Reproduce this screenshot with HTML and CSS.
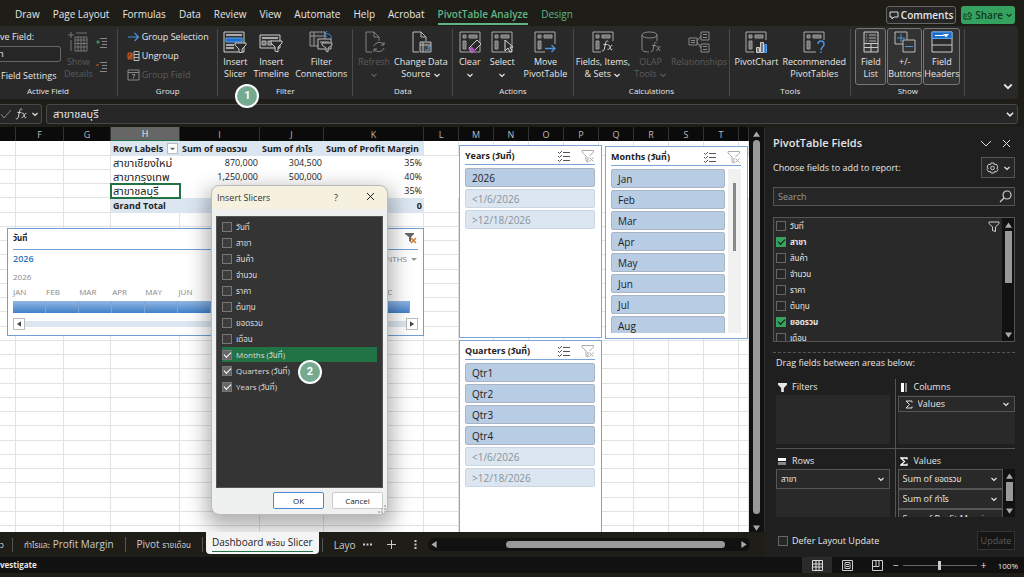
FILE: index.html
```html
<!DOCTYPE html>
<html lang="en">
<head>
<meta charset="utf-8">
<title>PivotTable Analyze</title>
<link rel="stylesheet" href="styles.css">
</head>
<body>
<svg class="defs" aria-hidden="true">
  <defs>
    <symbol id="pivot" viewBox="0 0 22 22"><path d="M1 1h20v20H1z" fill="#2b2b2b" stroke="#aaa"/><path d="M4 4h3v3H4zM10 4h8v3h-8zM4 10h3v8H4z" fill="#777" stroke="#999"/></symbol>
    <symbol id="chev" viewBox="0 0 8 8"><path d="M1.5 3L4 5.5 6.500 3" fill="none" stroke="currentColor" stroke-width="1.200"/></symbol>
    <symbol id="multi" viewBox="0 0 14 12"><path d="M1 2l1.500 1.500L5 1M1 6l1.500 1.500L5 5M1 10l1.500 1.500L5 9M6 2.500h7M6 6.500h7M6 10.500h7" fill="none" stroke="#555"/></symbol>
    <symbol id="clearf" viewBox="0 0 14 14"><path d="M1 1.500h11.500v1.500L8.500 7M1 1.500V3l4 4v5l2 1V8M8.500 8.500l4 4M12.500 8.500l-4 4" fill="none" stroke="#aaa"/></symbol>
    <symbol id="funnel" viewBox="0 0 10 10"><path d="M0 0h10v2L6.500 5.500V10h-3V5.500L0 2z" fill="currentColor"/></symbol>
    <symbol id="ofunnel" viewBox="0 0 12 12"><path d="M1 1h10v1.500L7.500 6v4.500l-3-1V6L1 2.500z" fill="#2a2a2a" stroke="#ccc"/></symbol>
    <symbol id="up" viewBox="0 0 8 6"><path d="M4 0l4 6H0z" fill="#aaa"/></symbol>
    <symbol id="down" viewBox="0 0 8 6"><path d="M4 6l4-6H0z" fill="#aaa"/></symbol>
    <symbol id="left" viewBox="0 0 6 8"><path d="M0 4l6-4v8z" fill="currentColor"/></symbol>
    <symbol id="right" viewBox="0 0 6 8"><path d="M6 4L0 0v8z" fill="currentColor"/></symbol>
    <symbol id="doc" viewBox="0 0 22 22"><path d="M9 21H3V1h8l5 5v4M11 1v5h5" fill="none" stroke="#bbb"/></symbol>
    <symbol id="fx" viewBox="0 0 16 14"><path d="M9 1.500C7-.2 6 1.500 5.500 4L4 11c-.5 2-1.500 2.500-3 1.500M3 5h5M8.500 6.500c2-1.500 2 0 3 3s1.500 2.500 2.500 1M14 6.500c-1.500-1-2 1-3 2.500s-1.500 3-3 2" fill="none" stroke="currentColor" stroke-width="1.100"/></symbol>
  </defs>
</svg>

<header class="tabbar">
  <nav class="tabs">
    <a href="#">Draw</a><a href="#">Page Layout</a><a href="#">Formulas</a><a href="#">Data</a><a href="#">Review</a><a href="#">View</a><a href="#">Automate</a><a href="#">Help</a><a href="#">Acrobat</a><a href="#" class="current">PivotTable Analyze</a><a href="#" class="context">Design</a>
  </nav>
  <button class="comments"><svg width="10" height="9" viewBox="0 0 10 9"><path d="M1 1h8v5H5L3 8V6H1z" fill="none" stroke="#ddd"/></svg>Comments</button>
  <button class="share"><svg width="10" height="9" viewBox="0 0 10 9"><path d="M3 3H1v5h7V6M3 6c0-2 1-3 3-3V1l3 3-3 2V4.500" fill="none" stroke="#10381f"/></svg>Share<svg width="8" height="8"><use href="#chev"/></svg></button>
</header>

<section class="ribbon">
  <div class="group g-active">
    <div class="tools">
      <div class="active-field">
        <label for="af">ve Field:</label>
        <input id="af" value="า">
        <button class="plain">Field Settings</button>
      </div>
      <button class="big off"><svg width="22" height="22" viewBox="0 0 22 22"><path d="M4 1v6M1 4h6M9 2h11M4 9v11M8 6h12v14H8zM8 9h12M8 12.500h12M8 16h12M11 6v14M14 6v14M17 6v14" fill="none" stroke="#777"/></svg><span>Show<br>Details</span></button>
      <div class="expand">
        <svg width="12" height="12" viewBox="0 0 12 12"><path d="M4 1.500h7M6 4.500h5M6 7.500h5M4 10.500h7" stroke="#888"/><path d="M0 5h4M2 3v4" stroke="#4a9a66"/></svg>
        <svg width="12" height="12" viewBox="0 0 12 12"><path d="M4 1.500h7M6 4.500h5M6 7.500h5M4 10.500h7" stroke="#888"/><path d="M0 4h3" stroke="#c55a1e"/></svg>
      </div>
    </div>
    <div class="caption">Active Field</div>
  </div>
  <div class="group g-group">
    <div class="stack">
      <button class="row"><svg width="13" height="12" viewBox="0 0 13 12"><path d="M1 6h10M7.500 2L11.500 6l-4 4" fill="none" stroke="#4b93e0" stroke-width="1.200"/></svg>Group Selection</button>
      <button class="row"><svg width="13" height="12" viewBox="0 0 13 12"><path d="M1 3h4v6H1z" fill="#7a3413" stroke="#c55a1e"/><path d="M2 8l3-4" stroke="#e67a35"/><path d="M7 1.500h5v9H7zM7 4.500h5M7 7.500h5" fill="none" stroke="#bbb"/></svg>Ungroup</button>
      <button class="row off"><svg width="13" height="12" viewBox="0 0 13 12"><path d="M1 1h11v10H1zM1 3.500h11M5 5.500h3l-2 4" fill="none" stroke="#888"/></svg>Group Field</button>
    </div>
    <div class="caption">Group</div>
  </div>
  <div class="group g-filter">
    <div class="tools">
      <button class="big"><svg width="24" height="22" viewBox="0 0 24 22"><path d="M1 1h20v20H1z" fill="#333" stroke="#ccc"/><path d="M3 4h16" stroke="#aaa" stroke-width="2"/><path d="M3 7h16v4H3z" fill="#1e6fc8" stroke="#5aa0ea"/><path d="M3 14h8M3 17h8" stroke="#aaa" stroke-width="2"/><path d="M12 12h11v2l-4 4v4l-3-1v-3l-4-4z" fill="#292929" stroke="#ccc"/></svg><span>Insert<br>Slicer</span></button>
      <button class="big"><svg width="24" height="22" viewBox="0 0 24 22"><path d="M1 4h20v13H1z" fill="#333" stroke="#ccc"/><path d="M3 7h16" stroke="#aaa" stroke-width="2"/><path d="M3 10h4v4H3zM9 10h4v4H9z" fill="#777" stroke="#aaa"/><path d="M12 10h11v2l-4 4v5l-3-1v-4l-4-4z" fill="#292929" stroke="#ccc"/></svg><span>Insert<br>Timeline</span></button>
      <button class="big"><svg width="24" height="22" viewBox="0 0 24 22"><path d="M1 1h15v14H1zM5 1v14M1 5h15" fill="#333" stroke="#999"/><path d="M9 8h13v10H9zM11 11h9" fill="#292929" stroke="#bbb"/><path d="M13 12h10v2l-4 3v4l-2-1v-3l-4-3z" fill="#292929" stroke="#bbb"/><path d="M22 8c1-4-2-6-7-5M18 0l-3 3 3 3" fill="none" stroke="#4b93e0"/></svg><span>Filter<br>Connections</span></button>
    </div>
    <div class="caption">Filter</div>
    <span class="badge b1">1</span>
  </div>
  <div class="group g-data">
    <div class="tools">
      <button class="big off"><svg width="22" height="22" viewBox="0 0 22 22"><use href="#doc" opacity=".6"/><path d="M11 15c1-4 8-5 10-1M21 11v3h-3M21 17c-1 4-8 5-10 1M11 21v-3h3" fill="none" stroke="#888"/></svg><span>Refresh<br><svg width="8" height="8"><use href="#chev"/></svg></span></button>
      <button class="big"><svg width="22" height="22" viewBox="0 0 22 22"><use href="#doc"/><path d="M10 11h11v10H10zM10 14h11M13 11v10" fill="#444" stroke="#bbb"/><path d="M15 19h4v-4M17.500 16.500L19 15l1.500 1.500" fill="none" stroke="#4b93e0"/></svg><span>Change Data<br>Source <svg width="8" height="8"><use href="#chev"/></svg></span></button>
    </div>
    <div class="caption">Data</div>
  </div>
  <div class="group g-actions">
    <div class="tools">
      <button class="big"><svg width="22" height="22" viewBox="0 0 22 22"><use href="#pivot"/><path d="M10 17l8-8 4 4-8 8h-2z" fill="#292929" stroke="#ccc"/><path d="M10.500 17.500l2-2 4 4-2 2h-2z" fill="#b04fc0"/></svg><span>Clear<br><svg width="8" height="8"><use href="#chev"/></svg></span></button>
      <button class="big"><svg width="22" height="22" viewBox="0 0 22 22"><use href="#pivot"/><path d="M14 9v11l3-3 2 4 2-1-2-4h3z" fill="#292929" stroke="#ddd"/></svg><span>Select<br><svg width="8" height="8"><use href="#chev"/></svg></span></button>
      <button class="big"><svg width="22" height="22" viewBox="0 0 22 22"><use href="#pivot"/><path d="M11 13h11v9H11z" fill="#292929"/><path d="M11 17.500h10M17.500 14l3.500 3.500-3.500 3.500" fill="none" stroke="#4b93e0" stroke-width="1.300"/></svg><span>Move<br>PivotTable</span></button>
    </div>
    <div class="caption">Actions</div>
  </div>
  <div class="group g-calc">
    <div class="tools">
      <button class="big"><svg width="22" height="22" viewBox="0 0 22 22"><use href="#pivot"/><path d="M9 10h13v12H9z" fill="#292929"/><use href="#fx" x="9" y="9" width="13" height="12"/></svg><span>Fields, Items,<br>&amp; Sets <svg width="8" height="8"><use href="#chev"/></svg></span></button>
      <button class="big off"><svg width="22" height="22" viewBox="0 0 22 22"><path d="M2 4v14c0 2 3 3 7 3M2 4c0-4 15-4 15 0v6M2 4c0 4 15 4 15 0" fill="none" stroke="#888"/><g color="#999"><use href="#fx" x="10" y="10" width="12" height="12"/></g></svg><span>OLAP<br>Tools <svg width="8" height="8"><use href="#chev"/></svg></span></button>
      <button class="big off"><svg width="22" height="22" viewBox="0 0 22 22"><path d="M1 7h8v7H1zM13 1h8v8h-8zM13 13h8v8h-8zM3 9.500h4M3 11.500h4M15 3.500h4M15 6.500h4M15 15.500h4M15 18.500h4M9 10l4-5M9 11l4 6" fill="none" stroke="#8a8a8a"/></svg><span>Relationships</span></button>
    </div>
    <div class="caption">Calculations</div>
  </div>
  <div class="group g-tools">
    <div class="tools">
      <button class="big"><svg width="22" height="22" viewBox="0 0 22 22"><use href="#pivot"/><path d="M9 9h13v13H9z" fill="#292929"/><path d="M11.500 16.500h3v5h-3zM15.500 11.500h3v10h-3z" fill="#777" stroke="#ccc"/><path d="M19.500 13.500h2v8h-2z" fill="#1e6fc8" stroke="#5aa0ea"/></svg><span>PivotChart</span></button>
      <button class="big"><svg width="22" height="22" viewBox="0 0 22 22"><use href="#pivot"/><path d="M13 9h9v13h-9z" fill="#292929"/><path d="M15 13c0-4 6-4 6 0 0 3-3 3-3 6M18 20.500v1.500" fill="none" stroke="#4b93e0" stroke-width="1.500"/></svg><span>Recommended<br>PivotTables</span></button>
    </div>
    <div class="caption">Tools</div>
  </div>
  <div class="group g-show">
    <div class="tools">
      <button class="big pressed"><svg width="16" height="22" viewBox="0 0 16 22"><path d="M1 1h14v20H1zM1 12.500h14M1 16.500h14M8 12v9" fill="#3a3a3a" stroke="#ccc"/><path d="M3 4h1M6 4h7M3 7h1M6 7h7M3 10h1M6 10h7" stroke="#aaa"/></svg><span>Field<br>List</span></button>
      <button class="big pressed"><svg width="22" height="22" viewBox="0 0 22 22"><path d="M1 1h12v12H1z" fill="#333" stroke="#bbb"/><path d="M9 9h12v12H9z" fill="#333" stroke="#bbb"/><path d="M3 7h8M7 3v8M11 15.500h8" stroke="#4b93e0"/></svg><span>+/-<br>Buttons</span></button>
      <button class="big pressed"><svg width="22" height="22" viewBox="0 0 22 22"><path d="M1 1h20v20H1zM1 14h20" fill="#2b2b2b" stroke="#ccc"/><path d="M1 1h20v6.500H1z" fill="#1e6fc8" stroke="#5aa0ea"/><path d="M4 4.500h9" stroke="#fff"/><path d="M12 3h6l-3 3.500z" fill="#fff"/></svg><span>Field<br>Headers</span></button>
    </div>
    <div class="caption">Show</div>
  </div>
  <div class="group g-end"><button class="collapse" aria-label="Collapse"><svg width="12" height="12"><use href="#chev"/></svg></button></div>
</section>

<section class="formula">
  <div class="fxbox">
    <svg width="12" height="12" viewBox="0 0 12 12"><path d="M1 6l3 4 7-8" fill="none" stroke="#888"/></svg>
    <svg width="13" height="12"><use href="#fx"/></svg>
    <svg width="8" height="8"><use href="#chev"/></svg>
  </div>
  <div class="fbar"><input aria-label="Formula" value="สาขาชลบุรี"><svg width="10" height="10"><use href="#chev"/></svg></div>
</section>

<main class="main">
  <div class="book">
    <div class="view">
      <div class="sheet">
        <table class="cells">
          <colgroup><col class="a"><col class="f"><col class="g"><col class="h"><col class="i"><col class="j"><col class="k"><col class="l"><col class="l"><col class="l"><col class="l"><col class="l"><col class="l"><col class="l"><col class="l"><col class="l"><col></colgroup>
          <thead><tr><th></th><th>F</th><th>G</th><th class="sel">H</th><th>I</th><th>J</th><th>K</th><th>L</th><th>M</th><th>N</th><th>O</th><th>P</th><th>Q</th><th>R</th><th>S</th><th>T</th><th></th></tr></thead>
          <tbody id="rows">
            <tr class="hd"><td></td><td></td><td></td><td><div class="rl">Row Labels<button aria-label="Filter rows"><svg width="7" height="7" viewBox="0 0 8 8"><path d="M1 3h6L4 6z" fill="#666"/></svg></button></div></td><td>Sum of ยอดรวม</td><td>Sum of กำไร</td><td>Sum of Profit Margin</td></tr>
            <tr class="val"><td></td><td></td><td></td><td>สาขาเชียงใหม่</td><td>870,000</td><td>304,500</td><td>35%</td></tr>
            <tr class="val"><td></td><td></td><td></td><td>สาขากรุงเทพ</td><td>1,250,000</td><td>500,000</td><td>40%</td></tr>
            <tr class="val"><td></td><td></td><td></td><td class="cursor">สาขาชลบุรี</td><td></td><td></td><td>35%</td></tr>
            <tr class="hd total"><td></td><td></td><td></td><td>Grand Total</td><td></td><td></td><td>0</td></tr>
          </tbody>
        </table>

        <section class="timeline">
          <div class="tl-head"><b>วันที่</b><svg width="13" height="12" viewBox="0 0 13 12"><path d="M0 1h9v1L6 5v5l-2-1V5L0 2z" fill="#666"/><path d="M6 6l5 5M11 6l-5 5" stroke="#d07a2c" stroke-width="1.500"/></svg></div>
          <div class="tl-sel"><span>2026</span><button>MONTHS <svg width="8" height="8" viewBox="0 0 8 8"><path d="M1 3h6L4 6z" fill="#999"/></svg></button></div>
          <div class="tl-year">2026</div>
          <div class="tl-months"><span>JAN</span><span>FEB</span><span>MAR</span><span>APR</span><span>MAY</span><span>JUN</span><span>JUL</span><span>AUG</span><span>SEP</span><span>OCT</span><span>NOV</span><span>DEC</span></div>
          <div class="tl-bar"><i></i><i></i><i></i><i></i><i></i><i></i><i></i><i></i><i></i><i></i><i></i><i></i></div>
          <div class="tl-scroll"><button aria-label="Earlier"><svg width="4" height="6"><use href="#left"/></svg></button><div></div><button aria-label="Later"><svg width="4" height="6"><use href="#right"/></svg></button></div>
        </section>

        <section class="slicer s-years">
          <header><b>Years (วันที่)</b><svg width="14" height="12"><use href="#multi"/></svg><svg width="14" height="14"><use href="#clearf"/></svg></header>
          <div class="items"><button>2026</button><button class="dim">&lt;1/6/2026</button><button class="dim">&gt;12/18/2026</button></div>
        </section>
        <section class="slicer s-months">
          <header><b>Months (วันที่)</b><svg width="14" height="12"><use href="#multi"/></svg><svg width="14" height="14"><use href="#clearf"/></svg></header>
          <div class="scrolling"><div class="items"><button>Jan</button><button>Feb</button><button>Mar</button><button>Apr</button><button>May</button><button>Jun</button><button>Jul</button><button>Aug</button></div><div class="track"><i></i></div></div>
        </section>
        <section class="slicer s-quarters">
          <header><b>Quarters (วันที่)</b><svg width="14" height="12"><use href="#multi"/></svg><svg width="14" height="14"><use href="#clearf"/></svg></header>
          <div class="items"><button>Qtr1</button><button>Qtr2</button><button>Qtr3</button><button>Qtr4</button><button class="dim">&lt;1/6/2026</button><button class="dim">&gt;12/18/2026</button></div>
        </section>

        <div class="dialog" role="dialog" aria-label="Insert Slicers">
          <div class="d-title"><span>Insert Slicers</span><button>?</button><button aria-label="Close"><svg width="9" height="9" viewBox="0 0 9 9"><path d="M1 1l7 7M8 1L1 8" stroke="#222"/></svg></button></div>
          <div class="d-list">
            <label><input type="checkbox">วันที่</label>
            <label><input type="checkbox">สาขา</label>
            <label><input type="checkbox">สินค้า</label>
            <label><input type="checkbox">จำนวน</label>
            <label><input type="checkbox">ราคา</label>
            <label><input type="checkbox">ต้นทุน</label>
            <label><input type="checkbox">ยอดรวม</label>
            <label><input type="checkbox">เดือน</label>
            <label class="hot"><input type="checkbox" checked>Months (วันที่)</label>
            <label><input type="checkbox" checked>Quarters (วันที่)</label>
            <label><input type="checkbox" checked>Years (วันที่)</label>
            <span class="badge b2">2</span>
          </div>
          <div class="d-foot"><button class="ok">OK</button><button>Cancel</button></div>
          <svg class="grip" width="8" height="8" viewBox="0 0 8 8"><path d="M6 0h2v2H6zM3 3h2v2H3zM6 3h2v2H6zM0 6h2v2H0zM3 6h2v2H3zM6 6h2v2H6z" fill="#bbb"/></svg>
        </div>
      </div>
      <div class="vscroll"><svg width="7" height="6"><use href="#up"/></svg><i></i><svg width="7" height="6"><use href="#down"/></svg></div>
    </div>
    <div class="sheettabs">
      <a href="#" class="cut">ว</a><a href="#"><small>กำไรและ</small> Profit Margin</a><a href="#">Pivot <small>รายเดือน</small></a><a href="#" class="on"><span>Dashboard <small>พร้อม</small> Slicer</span></a><a href="#" class="last">Layo</a>
      <button aria-label="More sheets"><svg width="9" height="9" viewBox="0 0 9 9"><path d="M0 3.500h2v2H0zM3.500 3.500h2v2h-2zM7 3.500h2v2H7z" fill="#ccc"/></svg></button>
      <button aria-label="New sheet"><svg width="9" height="9" viewBox="0 0 9 9"><path d="M0 4.500h9M4.500 0v9" stroke="#ccc"/></svg></button>
      <button aria-label="Resize"><svg width="9" height="9" viewBox="0 0 9 9"><path d="M3.500 0h2v2h-2zM3.500 3.500h2v2h-2zM3.500 7h2v2h-2z" fill="#ccc"/></svg></button>
      <div class="hscroll"><svg width="6" height="7"><use href="#left"/></svg><div><i></i></div><svg width="6" height="7"><use href="#right"/></svg></div>
    </div>
  </div>

  <aside class="pane">
    <div class="p-title"><h2>PivotTable Fields</h2><button aria-label="Options"><svg width="12" height="12" viewBox="0 0 12 12"><path d="M1 4l5 5 5-5" fill="none" stroke="#ddd"/></svg></button><button aria-label="Close"><svg width="9" height="9" viewBox="0 0 9 9"><path d="M1 1l7 7M8 1L1 8" stroke="#ddd"/></svg></button></div>
    <div class="p-choose"><span>Choose fields to add to report:</span><button aria-label="Tools"><svg width="13" height="12" viewBox="0 0 13 12"><path d="M5 1h3l.5 1.700 2-.4L12 5l-1.300 1L12 7.500l-1.500 2.300-2-.4L8 11H5l-.5-1.600-2 .4L1 7.500 2.300 6 1 5l1.500-2.700 2 .4z" fill="none" stroke="#ccc"/><circle cx="6.500" cy="6" r="1.800" fill="none" stroke="#ccc"/></svg><svg width="8" height="8"><use href="#chev"/></svg></button></div>
    <div class="p-search"><input type="text" placeholder="Search" aria-label="Search"><svg width="13" height="13" viewBox="0 0 13 13"><circle cx="8" cy="5" r="4" fill="none" stroke="#ccc" stroke-width="1.200"/><path d="M5 8l-4 4" stroke="#ccc" stroke-width="1.200"/></svg></div>
    <div class="p-list">
      <div class="checks">
        <label><input type="checkbox">วันที่</label>
        <label class="b"><input type="checkbox" checked>สาขา</label>
        <label><input type="checkbox">สินค้า</label>
        <label><input type="checkbox">จำนวน</label>
        <label><input type="checkbox">ราคา</label>
        <label><input type="checkbox">ต้นทุน</label>
        <label class="b"><input type="checkbox" checked>ยอดรวม</label>
        <label><input type="checkbox">เดือน</label>
      </div>
      <svg class="lf" width="12" height="12"><use href="#ofunnel"/></svg>
      <div class="lscroll"><svg width="7" height="6"><use href="#up"/></svg><i></i><svg width="7" height="6"><use href="#down"/></svg></div>
    </div>
    <div class="p-drag">Drag fields between areas below:</div>
    <div class="areas">
      <section><h3><svg width="9" height="9" viewBox="0 0 10 10"><use href="#funnel"/></svg>Filters</h3><div class="box"></div></section>
      <section><h3><svg width="9" height="9" viewBox="0 0 9 9"><path d="M1 0h3v9H1z" fill="#fff"/><path d="M5 0h2v9H5z" fill="#888"/></svg>Columns</h3><div class="box"><button class="tight"><svg width="8" height="9" viewBox="0 0 8 9"><path d="M7 2.500V1H1l3.500 3.500L1 8h6V6.500" fill="none" stroke="#ddd"/></svg><span>Values</span><svg width="8" height="8"><use href="#chev"/></svg></button></div></section>
      <section><h3><svg width="9" height="9" viewBox="0 0 9 9"><path d="M0 1h8v3H0z" fill="#fff"/><path d="M0 5h8v3H0z" fill="#888"/></svg>Rows</h3><div class="box"><button><span class="th">สาขา</span><svg width="8" height="8"><use href="#chev"/></svg></button></div></section>
      <section><h3><svg width="9" height="9" viewBox="0 0 9 9"><path d="M7 2.500V1H1l3.500 3.500L1 8h6V6.500" fill="none" stroke="#fff" stroke-width="1.300"/></svg>Values</h3><div class="box vals"><div class="vlist"><button><span>Sum of <small>ยอดรวม</small></span><svg width="8" height="8"><use href="#chev"/></svg></button><button><span>Sum of <small>กำไร</small></span><svg width="8" height="8"><use href="#chev"/></svg></button><button><span>Sum of Profit Margin</span><svg width="8" height="8"><use href="#chev"/></svg></button></div><div class="lscroll"><svg width="7" height="6"><use href="#up"/></svg><i></i><svg width="7" height="6"><use href="#down"/></svg></div></div></section>
    </div>
    <div class="p-foot"><label><input type="checkbox">Defer Layout Update</label><button disabled>Update</button></div>
  </aside>
</main>

<footer class="status">
  <b>vestigate</b>
  <button class="on" aria-label="Normal"><svg width="11" height="11" viewBox="0 0 11 11"><path d="M.5.500h10v10H.500zM.5 4h10M.5 7h10M4 .500v10M7 .500v10" fill="none" stroke="#ddd"/></svg></button>
  <button aria-label="Page layout"><svg width="11" height="11" viewBox="0 0 11 11"><path d="M.5.500h10v10H.500zM3 2.500h5v6H3zM4 4.500h3M4 6.500h3" fill="none" stroke="#ccc"/></svg></button>
  <button aria-label="Page break"><svg width="11" height="11" viewBox="0 0 11 11"><path d="M.5.500h10v10H.500zM4 .500v6M7 .500v6M.5 6.500H7" fill="none" stroke="#ccc"/></svg></button>
  <div class="zoom"><span>−</span><input type="range" aria-label="Zoom" min="0" max="100" value="50"><span>+</span><em>100%</em></div>
</footer>
<script src="app.js"></script>
</body>
</html>
```
FILE: styles.css
```css
* { box-sizing: border-box; }
html, body { height: 100%; }
body { margin: 0; display: flex; flex-direction: column; overflow: hidden; background: #1f1d18; color: #e6e6e6; font: 9px/12px "Open Sans", "Noto Sans", "Noto Sans Thai", sans-serif; }
button, input { font: inherit; color: inherit; margin: 0; padding: 0; border: 0; background: none; border-radius: 0; }
a { color: inherit; text-decoration: none; }
svg { flex: none; }
small { font-size: 8px; }
.defs { position: absolute; width: 0; height: 0; }

.tabbar { flex: none; display: flex; align-items: center; height: 26px; padding: 4px 9px 0 15px; gap: 5px; }
.tabs { flex: 1; display: flex; gap: 13px; font-size: 10px; line-height: 16px; white-space: nowrap; }
.tabs a { height: 19px; }
.tabs .current { color: #5fb585; font-weight: 600; border-bottom: 2px solid #5fb585; }
.tabs .context { color: #5fb585; }
.comments, .share { height: 18px; display: flex; align-items: center; gap: 2px; font-size: 10px; font-weight: 600; border-radius: 3px; padding: 0 2px; }
.comments { border: 1px solid #666; background: #262626; }
.share { background: #36a25f; color: #10381f; }

.ribbon { flex: none; display: flex; height: 73px; margin-right: 6px; background: #292929; border-radius: 0 4px 4px 0; padding: 3px 0; }
.group { position: relative; display: flex; flex-direction: column; justify-content: space-between; align-items: center; border-right: 1px solid #4a4a4a; min-width: 0; }
.g-active { flex: 118 1 0; align-items: flex-start; }
.g-group { flex: 100 1 0; }
.g-filter { flex: 135 1 0; }
.g-data { flex: 100 1 0; }
.g-actions { flex: 120 1 0; }
.g-calc { flex: 157 1 0; }
.g-tools { flex: 121 1 0; }
.g-show { flex: 114 1 0; }
.g-end { flex: 53 1 0; border: 0; justify-content: flex-end; }
.tools { display: flex; align-items: flex-start; gap: 6px; }
.g-calc .tools { gap: 4px; }
.g-actions .tools { gap: 9px; }
.g-tools .tools { gap: 4px; }
.g-show .tools { gap: 1px; margin-top: -1px; }
.g-data .tools { gap: 4px; }
.g-active .tools { gap: 3px; }
.big { display: flex; flex-direction: column; align-items: center; gap: 3px; padding-top: 2px; white-space: nowrap; line-height: 12px; }
.big span svg { vertical-align: middle; }
.off { color: #5c5c5c; }
.pressed { border: 1px solid #777; border-radius: 3px; background: #333; min-width: 31px; height: 57px; }
.caption { font-size: 8px; line-height: 10px; }
.g-active .caption { padding-left: 27px; }
.active-field { width: 61px; display: flex; flex-direction: column; gap: 3px; padding-top: 2px; white-space: nowrap; }
.active-field input { height: 16px; width: 61px; border: 1px solid #666; border-left: 0; border-radius: 0 3px 3px 0; background: #262626; }
.plain { text-align: left; padding: 5px 0 0 1px; }
.expand { display: flex; flex-direction: column; gap: 12px; padding-top: 8px; }
.stack { display: flex; flex-direction: column; gap: 7px; padding-top: 2px; }
.row { display: flex; align-items: center; gap: 2px; white-space: nowrap; }
.collapse { padding: 0 0 3px 32px; height: 16px; }
.badge { position: absolute; z-index: 5; width: 24px; height: 24px; border: 2px solid #fff; border-radius: 50%; background: #76aa90; color: #fff; text-align: center; font: bold 11px/20px Roboto, sans-serif; }
.b1 { left: 17px; bottom: -12px; }
.b2 { left: 81px; top: 143px; }

.formula { flex: none; display: flex; gap: 4px; padding: 5px 6px 3px 0; height: 28px; }
.fxbox { width: 42px; display: flex; align-items: center; gap: 3px; border: 1px solid #484848; border-left: 0; border-radius: 0 3px 3px 0; background: #262626; }
.fbar { flex: 1; display: flex; align-items: center; border: 1px solid #484848; border-radius: 3px; background: #262626; padding: 0 2px 0 6px; }
.fbar input { flex: 1; font-size: 11px; height: 17px; min-width: 0; }

.main { flex: 1; min-height: 0; display: flex; }
.book { flex: 1; min-width: 0; display: flex; flex-direction: column; }
.view { flex: 1; min-height: 0; display: flex; background: #111; }
.sheet { flex: 1; min-width: 0; position: relative; overflow: hidden; background: #fff; color: #222; }
.cells { width: 100%; table-layout: fixed; border-collapse: separate; border-spacing: 0; font-size: 9px; line-height: 13px; white-space: nowrap; }
.a { width: 16px; } .f { width: 48px; } .g { width: 47px; } .h { width: 69px; } .i { width: 80px; } .j { width: 64px; } .k { width: 100px; } .l { width: 35px; }
.cells th { height: 14px; padding: 0; font-weight: 400; background: #0b0b0b; color: #bbb; border-right: 1px solid #333; }
.cells th.sel { background: #666; color: #eee; border-bottom: 1px solid #217346; }
.cells td { height: 14px; padding: 0 1px 0 2px; border-right: 1px solid #e2e2e2; border-bottom: 1px solid #e2e2e2; }
.cells tbody tr:nth-child(4n+1) td { height: 15px; }
.val td:nth-child(n+4) { border-color: #fff; }
.cells .val td:nth-child(4) { font-size: 11px; }
.val td:nth-child(n+5), .total td:nth-child(n+5) { text-align: right; }
.hd td:nth-child(n+4):nth-child(-n+7) { background: #dce6f1; border-color: #dce6f1; font-weight: 700; }
.rl { display: flex; justify-content: space-between; align-items: center; }
.rl button { width: 11px; height: 11px; display: grid; place-items: center; background: #fff; border: 1px solid #bbb; }
.cells td.cursor { outline: 2px solid #217346; outline-offset: -1px; }

.timeline { position: absolute; left: 7px; top: 101px; width: 417px; height: 108px; border: 1px solid #6f9fd4; background: #fff; padding: 3px 5px; color: #888; font-size: 8px; }
.tl-head { display: flex; justify-content: space-between; height: 18px; border-bottom: 1px solid #6f9fd4; color: #222; }
.tl-sel { display: flex; justify-content: space-between; align-items: center; height: 18px; font-size: 9px; color: #2f72c0; }
.tl-sel span { font-weight: 600; }
.tl-sel button { color: #888; font-size: 8px; display: flex; gap: 3px; align-items: center; }
.tl-year { height: 16px; line-height: 17px; }
.tl-months, .tl-bar { display: grid; grid-template-columns: repeat(12, 1fr); margin-right: 8px; height: 17px; line-height: 15px; }
.tl-bar { height: 12px; background: linear-gradient(#92b7e2, #4180c8); }
.tl-bar i { border-right: 1px solid #7ba5d8; }
.tl-scroll { display: flex; align-items: center; height: 21px; }
.tl-scroll div { flex: 1; height: 6px; background: #dce6f1; }
.tl-scroll button { width: 12px; height: 12px; border: 1px solid #bbb; background: #fff; display: grid; place-items: center; color: #444; }

.slicer { position: absolute; width: 143px; height: 193px; border: 1px solid #7ba5d8; background: #fff; padding: 1px 6px 5px 5px; font-size: 10px; display: flex; flex-direction: column; }
.s-years { left: 459px; top: 18px; }
.s-months { left: 605px; top: 19px; }
.s-quarters { left: 459px; top: 213px; }
.slicer header { flex: none; height: 18px; display: flex; align-items: center; gap: 10px; border-bottom: 1px solid #7ba5d8; margin-bottom: 3px; }
.slicer header b { flex: 1; font-size: 9px; white-space: nowrap; }
.items { flex: 1; display: flex; flex-direction: column; gap: 2px; overflow: hidden; }
.items button { flex: none; height: 19px; border: 1px solid #a9b4c4; border-radius: 2px; background: #b8cce4; text-align: left; padding-left: 6px; }
.items .dim { background: #dce6f1; border-color: #ccd6e2; color: #8a929a; }
.scrolling { flex: 1; display: flex; gap: 3px; min-height: 0; }
.track { width: 13px; background: #f1f1f1; padding: 14px 5px; }
.track i { display: block; width: 3px; height: 68px; background: #888; }

.dialog { position: absolute; left: 212px; top: 59px; width: 175px; height: 328px; border-radius: 7px; background: #eff1f1; box-shadow: 0 8px 20px 6px rgba(0,0,0,.3); overflow: hidden; display: flex; flex-direction: column; outline: 1px solid #bbb; }
.d-title { height: 23px; background: #f6f1df; display: flex; align-items: center; padding-left: 5px; color: #333; }
.d-title span { flex: 1; }
.d-title button { width: 34px; }
.d-list { position: relative; flex: 1; margin: 7px 4px 4px; background: #343434; border: 1px solid #555; padding: 2px 5px 0 5px; font-size: 8px; color: #ddd; }
.d-list label, .checks label { display: flex; align-items: center; gap: 4px; height: 16px; white-space: nowrap; }
.d-list .hot { background: linear-gradient(#217346, #217346) no-repeat 0 0 / 100% 15px; }
input[type=checkbox] { appearance: none; width: 10px; height: 10px; border: 1px solid #777; background: #3d3d3d; display: grid; place-items: center; flex: none; }
.d-list input:checked { background: #666; }
input[type=checkbox]:checked::after { content: ""; width: 6px; height: 3px; border: solid #fff; border-width: 0 0 1px 1px; rotate: -45deg; translate: 0 -1px; }
.d-foot { display: flex; justify-content: flex-end; gap: 8px; padding: 0 4px 5px; font-size: 8px; }
.d-foot button { width: 51px; height: 17px; background: #fff; border: 1px solid #ccc; border-radius: 2px; color: #222; }
.d-foot .ok { border-color: #4b8ad0; }
.grip { position: absolute; right: 1px; bottom: 1px; }

.vscroll { width: 16px; display: flex; flex-direction: column; align-items: center; padding: 4px 0 1px; gap: 3px; border-right: 1px solid #2e2e2e; }
.vscroll i { flex: 1; width: 7px; border-radius: 4px; background: #999; margin-bottom: 8px; }
.sheettabs { flex: none; height: 25px; display: flex; align-items: center; white-space: nowrap; font-size: 10px; color: #ccc; padding-right: 15px; }
.sheettabs a { padding: 0 11px; border-right: 1px solid #555; line-height: 14px; }
.sheettabs a.cut { padding: 0; width: 13px; font-size: 8px; overflow: hidden; }
.sheettabs .on { align-self: flex-start; height: 22px; background: #f4f4f4; color: #222; padding: 3px 6px; border-radius: 0 0 4px 4px; margin: 0 3px; border: 0; }
.on span { display: block; border-bottom: 1px solid #217346; height: 17px; }
.sheettabs .last { border-right: 0; border-left: 1px solid #555; padding-right: 0; }
.sheettabs button { width: 24px; display: grid; place-items: center; }
.hscroll { flex: 1; display: flex; align-items: center; justify-content: space-between; background: #111; border-radius: 6px; height: 13px; padding: 0 3px; color: #aaa; }
.hscroll div { flex: 1; padding: 0 5% 0 22%; }
.hscroll i { display: block; height: 7px; border-radius: 4px; background: #999; }

.pane { width: 259px; flex: none; display: flex; flex-direction: column; background: #1f1f1f; padding: 5px 9px 0 8px; }
.p-title { display: flex; align-items: center; height: 22px; }
.p-title h2 { flex: 1; margin: 0; font-size: 11px; font-weight: 600; }
.p-title button { width: 24px; display: grid; place-items: center; }
.p-title button:last-child { width: 17px; }
.p-choose { display: flex; justify-content: space-between; align-items: center; height: 27px; }
.p-choose button { width: 34px; height: 21px; border: 1px solid #555; background: #262626; display: flex; align-items: center; justify-content: center; gap: 4px; }
.p-search { display: flex; align-items: center; height: 19px; margin-top: 6px; border: 1px solid #555; background: #262626; padding: 0 2px 0 4px; }
.p-search input { flex: 1; min-width: 0; height: 17px; }
.p-search input::placeholder { color: #999; opacity: 1; }
.p-list { margin-top: 11px; height: 125px; flex: none; border: 1px solid #555; background: #292929; display: flex; overflow: hidden; font-size: 8px; }
.checks { flex: 1; padding-left: 2px; }
.pane input[type=checkbox] { background: #262626; border-color: #666; }
.pane .b input { background: #36a25f; border-color: #36a25f; }
.pane .b input::after { border-color: #111; }
.b { font-weight: 700; }
.lf { margin: 3px 2px; }
.lscroll { width: 12px; background: #111; display: flex; flex-direction: column; align-items: center; padding: 4px 0 3px; gap: 3px; }
.lscroll i { width: 7px; height: 52px; background: #999; margin-bottom: auto; flex-shrink: 1; }
.p-drag { margin-top: 10px; border-top: 1px dashed #555; padding: 4px 0 0 3px; height: 27px; }
.areas { flex: 1; min-height: 0; margin-left: 3px; display: grid; grid-template: 1fr 1fr / 1fr 1fr; }
.areas section { display: flex; flex-direction: column; min-width: 0; min-height: 0; }
.areas section:nth-child(odd) { border-right: 1px solid #555; padding-right: 5px; }
.areas section:nth-child(even) { padding-left: 2px; }
.areas section:nth-child(n+3) { border-top: 1px solid #555; padding-top: 4px; }
.areas section:nth-child(-n+2) { padding-bottom: 4px; }
.areas h3 { flex: none; margin: 0; font-size: 9px; font-weight: 400; height: 16px; display: flex; align-items: center; gap: 5px; padding-left: 2px; }
.box { flex: 1; min-height: 0; background: #292929; overflow: hidden; }
.box button { display: flex; align-items: center; gap: 5px; width: 100%; height: 20px; border: 1px solid #555; padding: 0 4px; text-align: left; flex: none; }
.box .tight { height: 16px; padding-left: 6px; margin-top: 1px; }
.box button span { flex: 1; white-space: nowrap; overflow: hidden; }
.box .th { font-size: 8px; }
.vals { display: flex; }
.vlist { flex: 1; min-width: 0; }
.vals .lscroll i { height: 19px; }
.p-foot { height: 40px; flex: none; display: flex; justify-content: space-between; align-items: center; padding: 7px 0 0 5px; }
.p-foot label { display: flex; align-items: center; gap: 4px; }
.p-foot button { width: 38px; height: 19px; border: 1px solid #333; color: #5c5c5c; background: #161616; }

.status { flex: none; height: 20px; border-bottom: 4px solid #1f1d18; background: #111; display: flex; align-items: center; font-size: 8px; }
.status b { flex: 1; }
.status button { width: 30px; height: 16px; display: grid; place-items: center; }
.status .on { background: #2a2a2a; }
.zoom { display: flex; align-items: center; gap: 4px; width: 131px; padding-right: 6px; font-size: 10px; margin-left: 1px; }
.zoom em { font: 8px "Open Sans", sans-serif; margin-left: auto; }
.zoom input { appearance: none; width: 74px; height: 10px; background: linear-gradient(#666, #666) no-repeat center / 100% 1px; }
.zoom input::-webkit-slider-thumb { appearance: none; width: 3px; height: 9px; background: #ccc; }
```
FILE: app.js
```js
// Fill the worksheet out to 17 columns and 28 rows of empty cells.
const body = document.getElementById('rows');
while (body.rows.length < 28) body.insertRow();
for (const row of body.rows) while (row.cells.length < 17) row.insertCell();
```
